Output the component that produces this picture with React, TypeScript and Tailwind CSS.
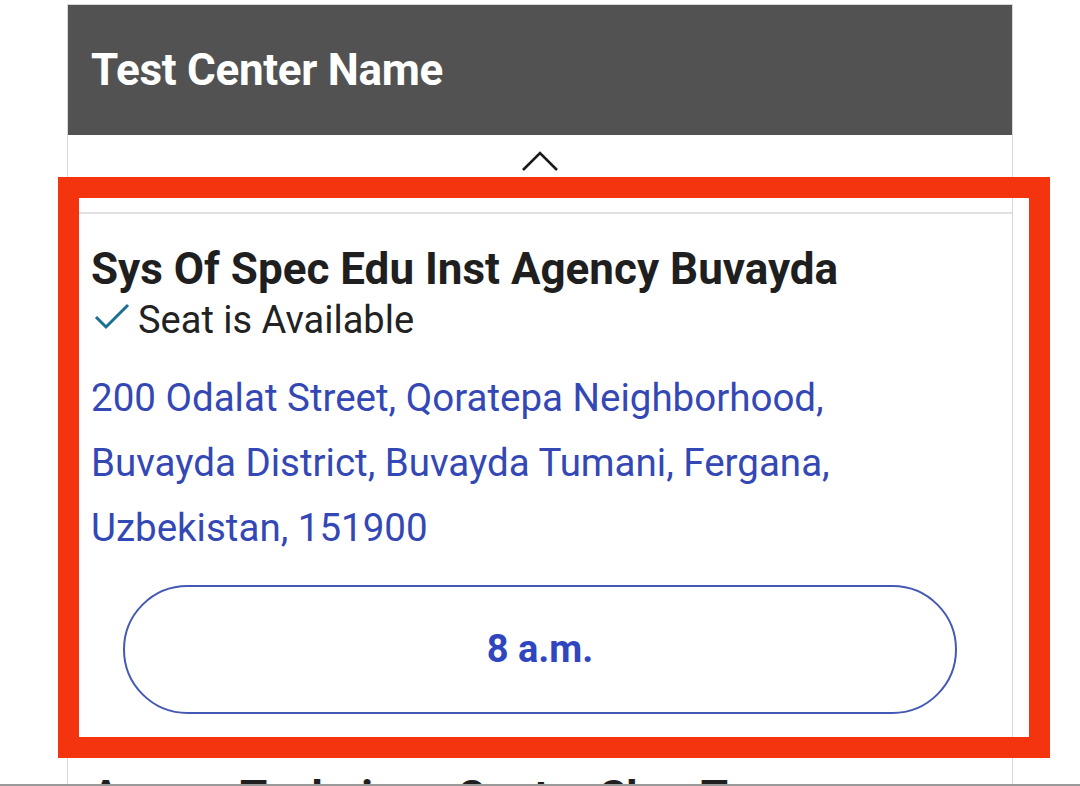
import React from "react";

export default function App() {
  return (
    <div
      className="relative w-[1080px] h-[786px] overflow-hidden bg-white flex flex-col"
      style={{ fontFamily: "Roboto, 'Liberation Sans', sans-serif" }}
    >
      <div className="flex-1 overflow-hidden pt-[4px]">
        <div className="ml-[67px] w-[946px] border-x border-t border-[#d8d8d8]">
          {/* Header */}
          <div className="h-[130px] bg-[#525252] flex items-center pl-[23px]">
            <span className="text-white font-bold text-[44px] leading-none tracking-[-0.3px]">
              Test Center Name
            </span>
          </div>
          {/* Chevron row */}
          <div className="h-[77px] flex items-start justify-center pt-[15px]">
            <svg width="38" height="22" viewBox="0 0 38 22" fill="none">
              <path d="M2 20 L19 3 L36 20" stroke="#1a1a1a" strokeWidth="2.6" />
            </svg>
          </div>
          <div className="h-[2px] bg-[#e0e0e0]" />
          {/* Item */}
          <div className="pl-[23px] pr-[24px] pt-[29px] pb-[24px]">
            <div className="text-[44px] leading-[52px] font-bold text-[#1f1f1f] whitespace-nowrap">
              Sys Of Spec Edu Inst Agency Buvayda
            </div>
            <div className="flex items-center h-[50px]">
              <svg width="40" height="30" viewBox="0 0 40 30" fill="none" className="mr-[5px] ml-[2px] -mt-[6px]">
                <path d="M3 15 L13 25 L35 3" stroke="#1c6f93" strokeWidth="3" />
              </svg>
              <span className="text-[38px] leading-[50px] text-[#222222]">Seat is Available</span>
            </div>
            <div className="mt-[20px] text-[38.5px] leading-[65px] text-[#3448b5]">
              <div>200 Odalat Street, Qoratepa Neighborhood,</div>
              <div>Buvayda District, Buvayda Tumani, Fergana,</div>
              <div>Uzbekistan, 151900</div>
            </div>
            <div className="mt-[25px] ml-[32px] mr-[31px] h-[129px] rounded-full border-[2px] border-[#4459b3] flex items-center justify-center">
              <span className="text-[38px] font-bold text-[#2f46bf]">8 a.m.</span>
            </div>
          </div>
          <div className="h-[2px] bg-[#e0e0e0]" />
          <div className="pl-[23px] pt-[31px]">
            <div className="text-[44px] leading-[52px] font-bold text-[#1f1f1f] whitespace-nowrap">
              Aranza Technique Centre Shar Tuman
            </div>
          </div>
        </div>
      </div>
      <div className="h-[2px] bg-[#9a9a9a] shrink-0" />

      {/* Red annotation box */}
      <div className="absolute left-[58px] top-[177px] w-[992px] h-[581px] border-[21px] border-[#f4340f] pointer-events-none" />
    </div>
  );
}
